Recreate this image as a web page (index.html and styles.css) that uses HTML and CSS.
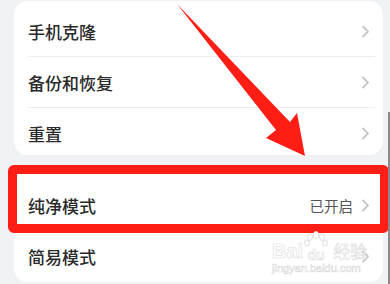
FILE: index.html
```html
<!DOCTYPE html>
<html lang="zh-CN">
<head>
<meta charset="utf-8">
<title>设置</title>
<link rel="stylesheet" href="styles.css">
</head>
<body>
<div class="page">
  <section class="card card-top">
    <div class="row"><span class="label">手机克隆</span><span class="chev"><svg width="9" height="13" viewBox="0 0 9 13"><polyline points="2,1.5 7,6.5 2,11.5" fill="none" stroke="#c6c7c9" stroke-width="1.8" stroke-linecap="round" stroke-linejoin="round"/></svg></span></div>
    <div class="row"><span class="label">备份和恢复</span><span class="chev"><svg width="9" height="13" viewBox="0 0 9 13"><polyline points="2,1.5 7,6.5 2,11.5" fill="none" stroke="#c6c7c9" stroke-width="1.8" stroke-linecap="round" stroke-linejoin="round"/></svg></span></div>
    <div class="row row-last"><span class="label">重置</span><span class="chev"><svg width="9" height="13" viewBox="0 0 9 13"><polyline points="2,1.5 7,6.5 2,11.5" fill="none" stroke="#c6c7c9" stroke-width="1.8" stroke-linecap="round" stroke-linejoin="round"/></svg></span></div>
  </section>
  <section class="card card-bottom">
    <div class="row"><span class="label">纯净模式</span><span class="value">已开启</span><span class="chev"><svg width="9" height="13" viewBox="0 0 9 13"><polyline points="2,1.5 7,6.5 2,11.5" fill="none" stroke="#c6c7c9" stroke-width="1.8" stroke-linecap="round" stroke-linejoin="round"/></svg></span></div>
    <div class="row row-last"><span class="label">简易模式</span><span class="chev"><svg width="9" height="13" viewBox="0 0 9 13"><polyline points="2,1.5 7,6.5 2,11.5" fill="none" stroke="#c6c7c9" stroke-width="1.8" stroke-linecap="round" stroke-linejoin="round"/></svg></span></div>
  </section>
</div>

<div class="highlight"></div>

<svg class="arrow" width="390" height="284" viewBox="0 0 390 284">
  <polygon points="177,4 290,122 297,113 305,156 266,138 276,130" fill="#ff1e16"/>
</svg>

<div class="scrollbar"></div>

<div class="watermark">
  <div class="wm-top"><span class="wm-bai">Bai</span><span class="wm-paw"><svg width="26" height="22" viewBox="0 0 26 22"><g fill="#fff" stroke="#e0e0e0" stroke-width="1"><ellipse cx="7" cy="6" rx="2.6" ry="3.4"/><ellipse cx="13" cy="4" rx="2.6" ry="3.4"/><ellipse cx="19" cy="6" rx="2.6" ry="3.4"/><ellipse cx="4" cy="12" rx="2.4" ry="3"/><ellipse cx="22" cy="12" rx="2.4" ry="3"/></g></svg><span class="wm-du">du</span></span><span class="wm-cn">经验</span></div>
  <div class="wm-url">jingyan.baidu.com</div>
</div>
</body>
</html>
```

FILE: styles.css
```css
html, body {
  margin: 0;
  padding: 0;
}

body {
  width: 390px;
  height: 284px;
  overflow: hidden;
  background: #f1f2f5;
  font-family: "Noto Sans CJK SC", "Noto Sans", sans-serif;
  position: relative;
}

.page {
  padding: 1px 7px 0 14px;
  display: flex;
  flex-direction: column;
  gap: 13px;
}

.card {
  background: #ffffff;
  border-radius: 14px;
  display: flex;
  flex-direction: column;
}

.card-top {
  padding-top: 5px;
}

.card-bottom {
  padding-top: 12px;
}

.row {
  box-sizing: border-box;
  height: 51px;
  margin: 0 8px 0 14px;
  padding-right: 5px;
  border-bottom: 1px solid #ececee;
  display: flex;
  align-items: center;
  gap: 8px;
}

.row-last {
  border-bottom: none;
}

.card-top .row-last {
  height: 47px;
  padding-top: 4px;
}

.label {
  flex: 1;
  font-size: 17px;
  color: #2a2a2a;
  font-weight: 500;
}

.value {
  font-size: 14.5px;
  color: #555;
}

.chev {
  display: flex;
  align-items: center;
}

.highlight {
  position: absolute;
  left: 8px;
  top: 165px;
  width: 381px;
  height: 68px;
  box-sizing: border-box;
  border: 9px solid #ff1e16;
  border-radius: 6px;
}

.arrow {
  position: absolute;
  left: 0;
  top: 0;
}

.scrollbar {
  position: absolute;
  left: 388px;
  top: 112px;
  width: 2px;
  height: 172px;
  background: #8a8a8c;
}

.watermark {
  position: absolute;
  left: 272px;
  top: 231px;
  font-family: "Liberation Sans", sans-serif;
  color: #ffffff;
  -webkit-text-stroke: 0.6px #dcdcdc;
}

.wm-top {
  display: flex;
  align-items: flex-end;
  height: 30px;
}

.wm-bai {
  font-size: 20px;
  font-weight: bold;
  line-height: 20px;
}

.wm-paw {
  display: flex;
  flex-direction: column;
  align-items: center;
  width: 26px;
}

.wm-paw svg {
  display: block;
}

.wm-du {
  font-size: 14px;
  font-weight: bold;
  line-height: 12px;
  margin-top: -4px;
}

.wm-cn {
  font-family: "Noto Sans CJK SC", sans-serif;
  font-size: 17px;
  line-height: 20px;
  margin-left: 4px;
}

.wm-url {
  font-size: 11px;
  line-height: 12px;
  margin-top: 1px;
}
```
